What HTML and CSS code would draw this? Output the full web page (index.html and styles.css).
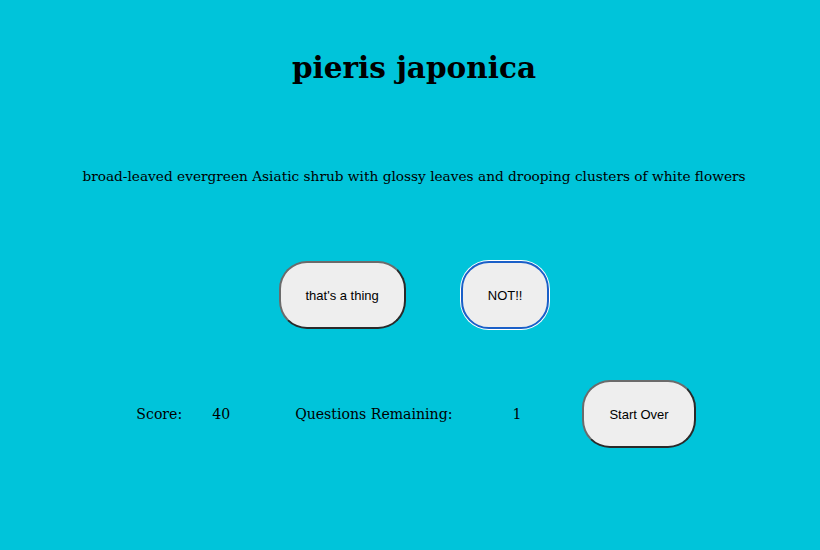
FILE: index.html
```html
<!DOCTYPE html>
<html>
<head>
<meta charset="utf-8">
<link rel="stylesheet" href="styles.css">
</head>
<body>
<main class="app">
  <h1 class="title">pieris japonica</h1>
  <p class="definition">broad-leaved evergreen Asiatic shrub with glossy leaves and drooping clusters of white flowers</p>
  <div class="choices">
    <button class="btn">that's a thing</button>
    <button class="btn btn-focus">NOT!!</button>
  </div>
  <div class="status">
    <span class="label">Score:</span>
    <span class="value score">40</span>
    <span class="label remaining">Questions Remaining:</span>
    <span class="value count">1</span>
    <button class="btn restart">Start Over</button>
  </div>
</main>
</body>
</html>
```

FILE: styles.css
```css
html, body {
  margin: 0;
  padding: 0;
  background: #00c4da;
  height: 100%;
}
body {
  font-family: "DejaVu Serif", "Liberation Serif", serif;
  color: #000;
}
.app {
  display: flex;
  flex-direction: column;
  align-items: center;
  padding-top: 48px;
  padding-left: 8px;
}
.title {
  margin: 0;
  font-size: 29.5px;
  font-weight: bold;
  line-height: 40px;
}
.definition {
  margin: 78px 0 0;
  font-size: 13.7px;
  line-height: 20px;
}
.choices {
  display: flex;
  gap: 55px;
  margin-top: 75px;
}
.btn {
  font-family: "Liberation Sans", Arial, sans-serif;
  font-size: 13px;
  color: #000;
  background: #eeeeee;
  height: 68px;
  padding: 0 25px;
  border-radius: 28px;
  border: 2px solid;
  border-color: #6b6b6b #2a2a2a #2a2a2a #6b6b6b;
}
.btn-focus {
  border: 2px solid #1a5fc8;
  box-shadow: 0 0 0 1px #ffffff;
}
.status {
  display: flex;
  align-items: center;
  margin-top: 51px;
  margin-left: 4px;
  font-size: 14.1px;
}
.score { margin-left: 30px; }
.remaining { margin-left: 65px; }
.count { margin-left: 60px; }
.restart {
  margin-left: 61px;
  padding: 0 25px;
}
```
